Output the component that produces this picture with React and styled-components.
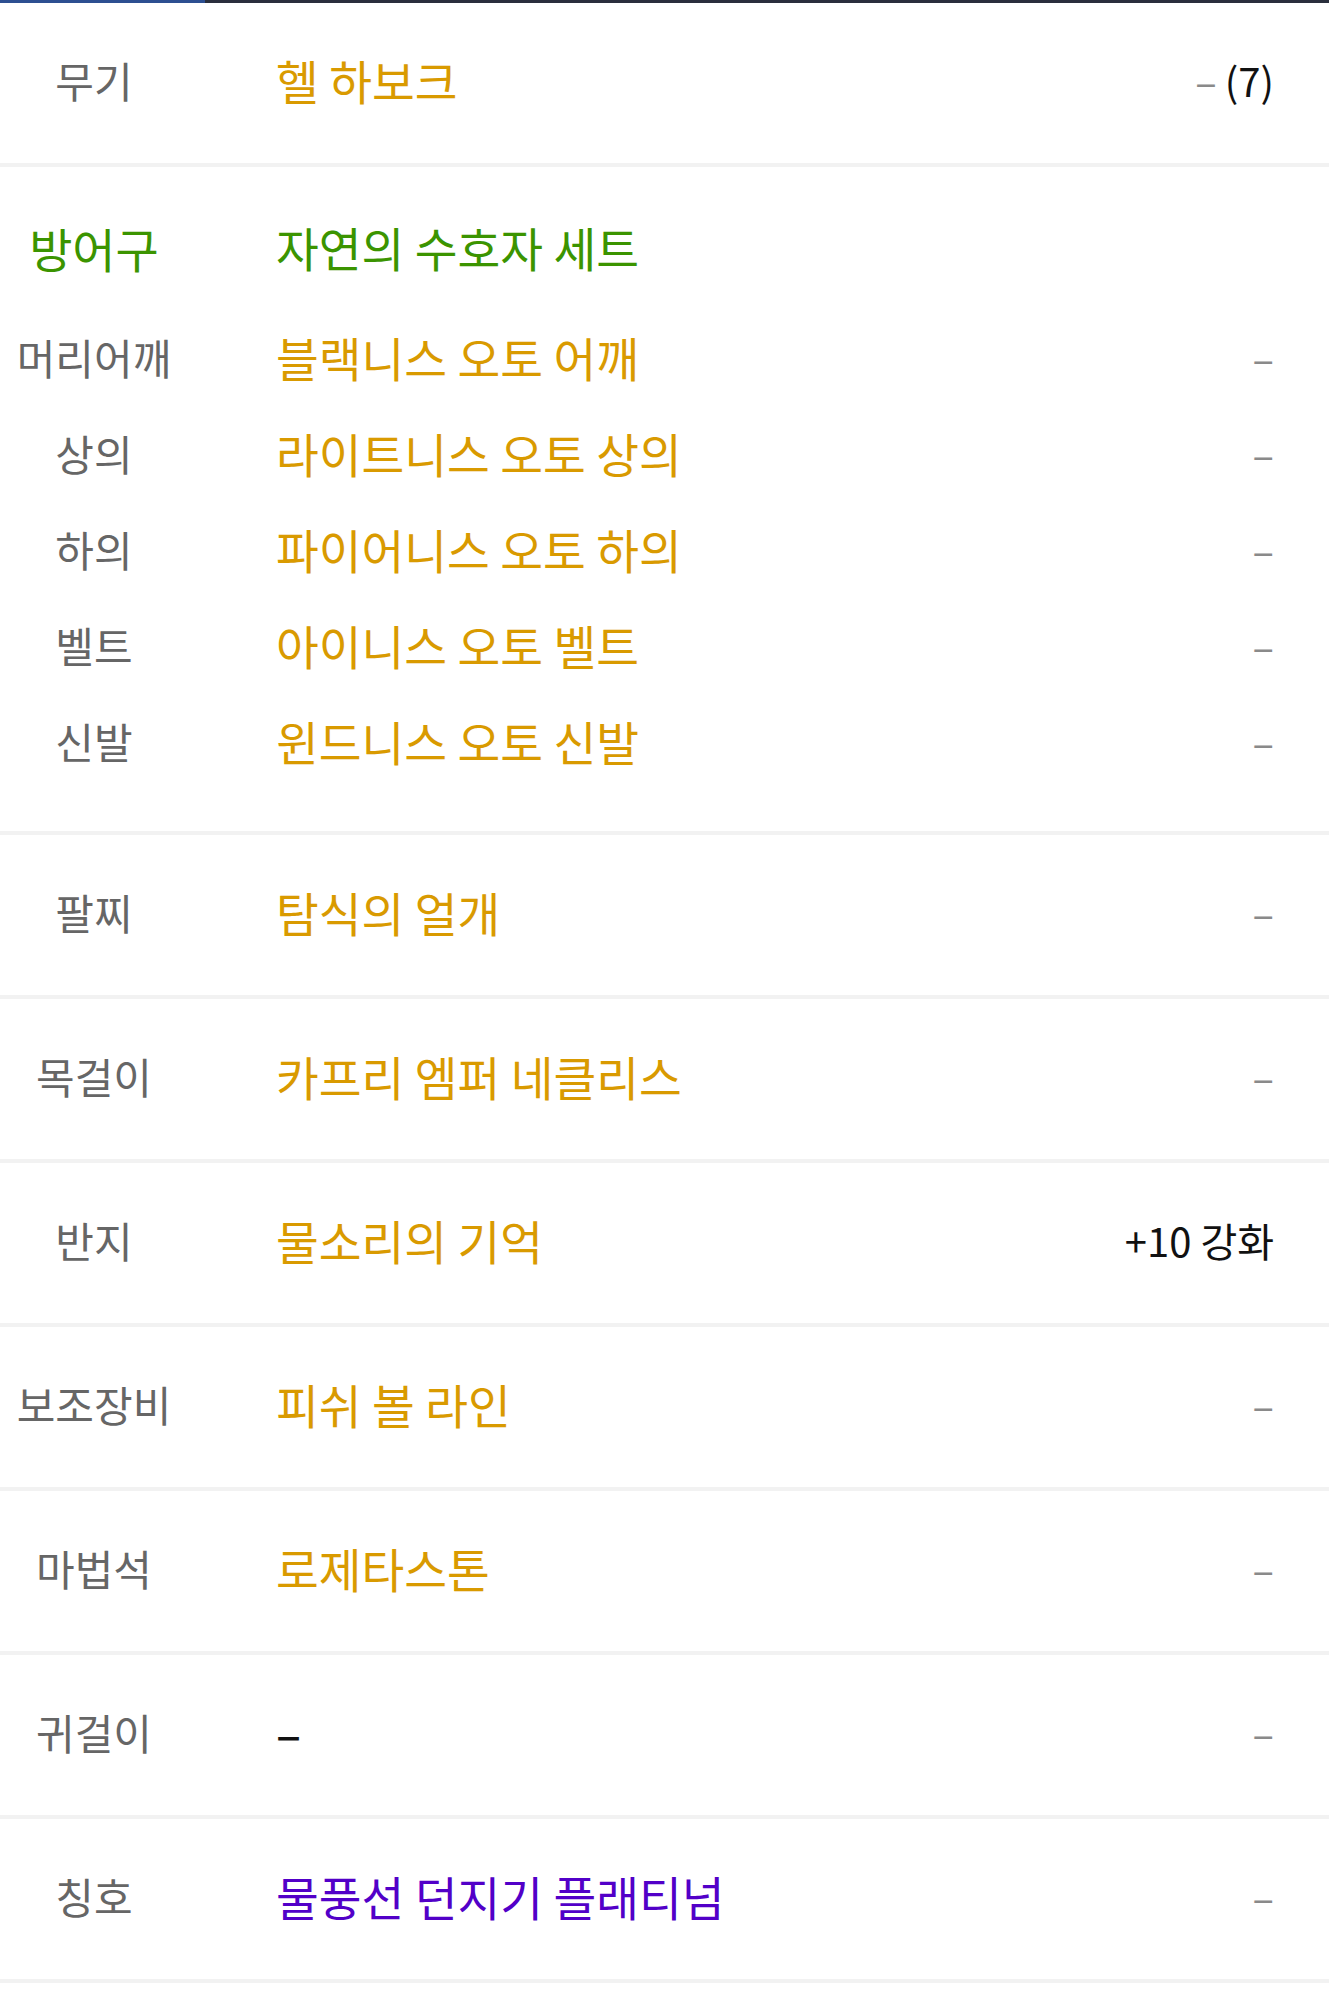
import React from "react";
import styled, { createGlobalStyle } from "styled-components";

const GlobalStyle = createGlobalStyle`
  body {
    margin: 0;
    background: #ffffff;
    font-family: "Noto Sans CJK KR", "Noto Sans", sans-serif;
  }
`;

const ORANGE = "#d99a00";
const GREEN = "#3b9400";
const PURPLE = "#5200c8";

const armor = [
  { slot: "머리어깨", name: "블랙니스 오토 어깨" },
  { slot: "상의", name: "라이트니스 오토 상의" },
  { slot: "하의", name: "파이어니스 오토 하의" },
  { slot: "벨트", name: "아이니스 오토 벨트" },
  { slot: "신발", name: "윈드니스 오토 신발" },
];

const singles = [
  { slot: "팔찌", name: "탐식의 얼개", color: ORANGE },
  { slot: "목걸이", name: "카프리 엠퍼 네클리스", color: ORANGE },
  { slot: "반지", name: "물소리의 기억", color: ORANGE, extra: "+10 강화" },
  { slot: "보조장비", name: "피쉬 볼 라인", color: ORANGE },
  { slot: "마법석", name: "로제타스톤", color: ORANGE },
  { slot: "귀걸이", name: "–", color: "#111111", empty: true },
  { slot: "칭호", name: "물풍선 던지기 플래티넘", color: PURPLE },
];

export default function App() {
  return (
    <>
      <GlobalStyle />
      <Page>
        <TopBar>
          <Indicator />
        </TopBar>

        <Block>
          <Row $h={160} $single>
            <Label>무기</Label>
            <Item $color={ORANGE}>헬 하보크</Item>
            <Value>
              <Dash>–</Dash>
              <Strong>(7)</Strong>
            </Value>
          </Row>
        </Block>

        <Block $pad>
          <Row $h={96} $head>
            <Label $color={GREEN} $big>
              방어구
            </Label>
            <Item $color={GREEN}>자연의 수호자 세트</Item>
            <Value />
          </Row>
          {armor.map((a) => (
            <Row key={a.slot} $h={96}>
              <Label>{a.slot}</Label>
              <Item $color={ORANGE}>{a.name}</Item>
              <Value>
                <Dash>–</Dash>
              </Value>
            </Row>
          ))}
        </Block>

        {singles.map((s) => (
          <Block key={s.slot}>
            <Row $h={160} $single>
              <Label>{s.slot}</Label>
              <Item $color={s.color} $empty={s.empty}>
                {s.name}
              </Item>
              <Value>
                {s.extra ? <Strong>{s.extra}</Strong> : <Dash>–</Dash>}
              </Value>
            </Row>
          </Block>
        ))}
      </Page>
    </>
  );
}

const Page = styled.div`
  width: 100%;
  background: #ffffff;
`;

const TopBar = styled.div`
  height: 3px;
  background: #2a2f3d;
`;

const Indicator = styled.div`
  width: 205px;
  height: 100%;
  background: #2d4f91;
`;

const Block = styled.section`
  border-bottom: 4px solid #f2f2f2;
  padding: ${(p) => (p.$pad ? "32px 0 42px" : "0")};
`;

const Row = styled.div`
  box-sizing: border-box;
  display: grid;
  grid-template-columns: 188px 1fr auto;
  column-gap: 88px;
  align-items: center;
  height: ${(p) => p.$h}px;
  padding-right: 55px;
  padding-bottom: ${(p) => (p.$single ? "6px" : "0")};
  margin-bottom: ${(p) => (p.$head ? "14px" : "0")};
`;

const Label = styled.div`
  text-align: center;
  font-size: ${(p) => (p.$big ? "47px" : "42px")};
  line-height: 1;
  color: ${(p) => p.$color || "#666666"};
  white-space: nowrap;
`;

const Item = styled.div`
  font-size: 46.5px;
  line-height: 1;
  color: ${(p) => p.$color};
  font-weight: ${(p) => (p.$empty ? 500 : 400)};
  white-space: nowrap;
`;

const Value = styled.div`
  display: flex;
  align-items: center;
  gap: 8px;
  font-size: 40px;
  line-height: 1;
  white-space: nowrap;
`;

const Dash = styled.span`
  color: #8a8a8a;
`;

const Strong = styled.span`
  color: #111111;
`;
